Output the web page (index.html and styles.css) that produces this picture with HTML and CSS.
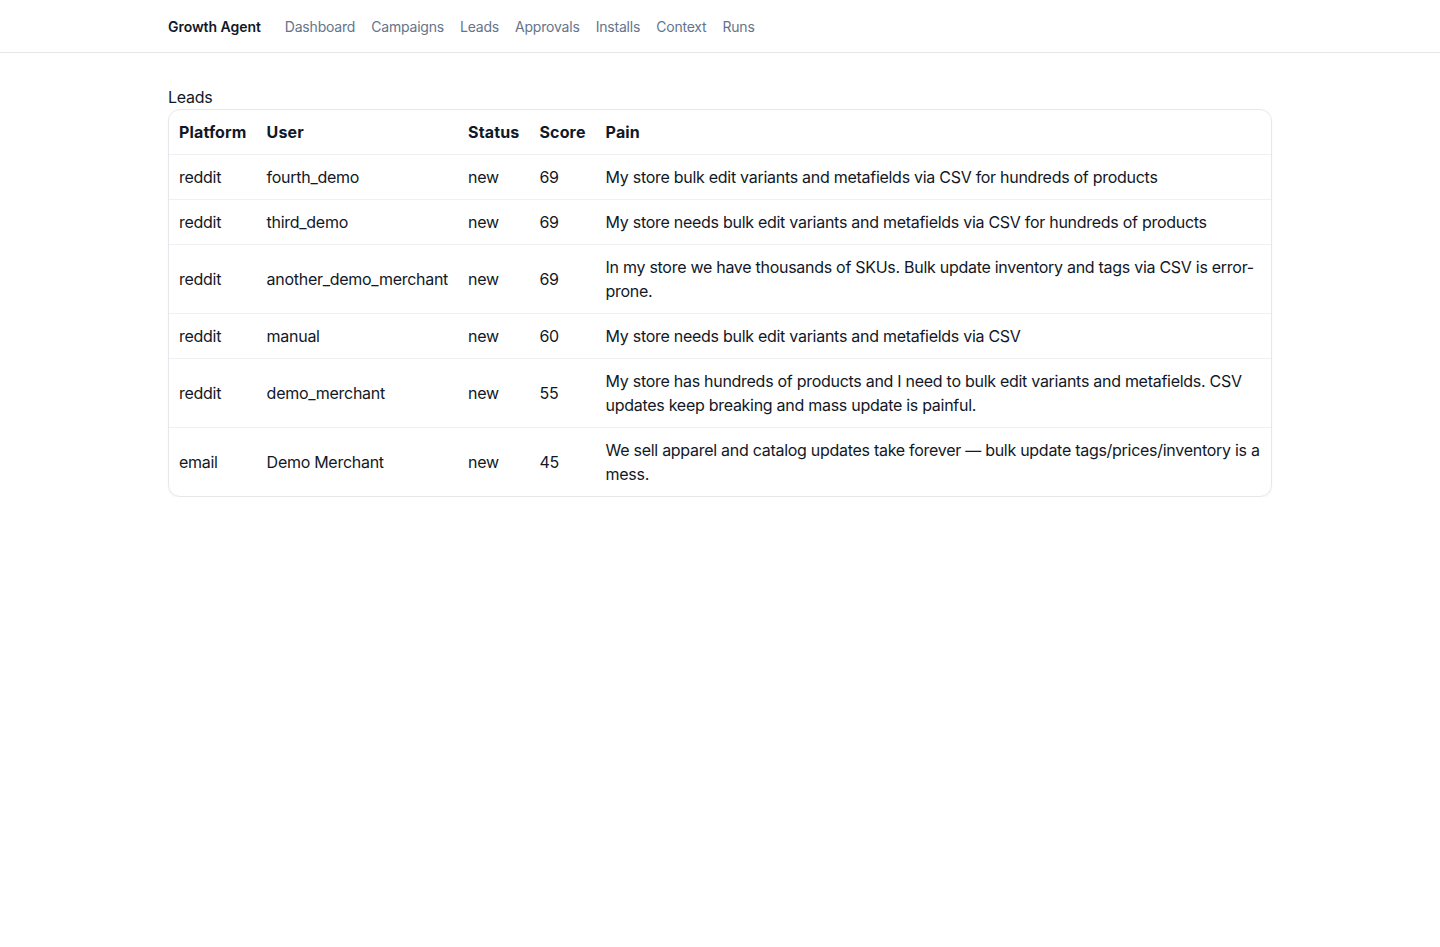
FILE: index.html
```html
<!DOCTYPE html>
<html lang="en">
<head>
  <meta charset="UTF-8" />
  <meta name="viewport" content="width=device-width, initial-scale=1.0" />
  <title>Leads - Growth Agent</title>
  <link rel="stylesheet" href="styles.css">
</head>
<body>
  <nav class="topnav">
    <div class="container nav-inner">
      <a class="brand" href="#">Growth Agent</a>
      <a class="nav-link" href="#">Dashboard</a>
      <a class="nav-link" href="#">Campaigns</a>
      <a class="nav-link" href="#">Leads</a>
      <a class="nav-link" href="#">Approvals</a>
      <a class="nav-link" href="#">Installs</a>
      <a class="nav-link" href="#">Context</a>
      <a class="nav-link" href="#">Runs</a>
    </div>
  </nav>

  <main class="container page">
    <h2 class="section-title">Leads</h2>
    <div class="card">
      <table class="leads">
        <thead>
          <tr>
            <th>Platform</th>
            <th>User</th>
            <th>Status</th>
            <th>Score</th>
            <th>Pain</th>
          </tr>
        </thead>
        <tbody>
          <tr>
            <td>reddit</td>
            <td>fourth_demo</td>
            <td>new</td>
            <td>69</td>
            <td>My store bulk edit variants and metafields via CSV for hundreds of products</td>
          </tr>
          <tr>
            <td>reddit</td>
            <td>third_demo</td>
            <td>new</td>
            <td>69</td>
            <td>My store needs bulk edit variants and metafields via CSV for hundreds of products</td>
          </tr>
          <tr>
            <td>reddit</td>
            <td>another_demo_merchant</td>
            <td>new</td>
            <td>69</td>
            <td>In my store we have thousands of SKUs. Bulk update inventory and tags via CSV is error-prone.</td>
          </tr>
          <tr>
            <td>reddit</td>
            <td>manual</td>
            <td>new</td>
            <td>60</td>
            <td>My store needs bulk edit variants and metafields via CSV</td>
          </tr>
          <tr>
            <td>reddit</td>
            <td>demo_merchant</td>
            <td>new</td>
            <td>55</td>
            <td>My store has hundreds of products and I need to bulk edit variants and metafields. CSV updates keep breaking and mass update is painful.</td>
          </tr>
          <tr>
            <td>email</td>
            <td>Demo Merchant</td>
            <td>new</td>
            <td>45</td>
            <td>We sell apparel and catalog updates take forever — bulk update tags/prices/inventory is a mess.</td>
          </tr>
        </tbody>
      </table>
    </div>
  </main>
</body>
</html>
```

FILE: styles.css
```css
* {
  box-sizing: border-box;
  margin: 0;
  padding: 0;
}

body {
  font-family: Inter, 'Noto Sans', sans-serif;
  background: #fff;
  color: #111827;
  font-size: 16px;
  line-height: 24px;
  letter-spacing: -0.28px;
}

.container {
  max-width: 1104px;
  margin: 0 auto;
}

.topnav {
  border-bottom: 1px solid #e5e7eb;
}

.nav-inner {
  display: flex;
  align-items: center;
  gap: 16px;
  padding: 17px 0 15px;
  font-size: 14px;
  line-height: 20px;
  letter-spacing: -0.2px;
}

.nav-inner a {
  text-decoration: none;
}

.brand {
  font-weight: 600;
  color: #111827;
  margin-right: 8px;
  letter-spacing: -0.05px;
}

.nav-link {
  color: #64748b;
}

.page {
  padding-top: 32px;
}

.section-title {
  font-size: 16px;
  font-weight: 400;
  line-height: 24px;
}

.card {
  border: 1px solid #e5e7eb;
  border-radius: 12px;
  box-shadow: 0 1px 2px rgba(0, 0, 0, 0.05);
  overflow: hidden;
}

.leads {
  width: 100%;
  border-collapse: collapse;
}

.leads th,
.leads td {
  text-align: left;
  padding: 10px;
  vertical-align: middle;
}

.leads th {
  font-weight: 700;
  letter-spacing: 0.15px;
}

.leads tbody td {
  border-top: 1px solid #eef0f3;
}
```
